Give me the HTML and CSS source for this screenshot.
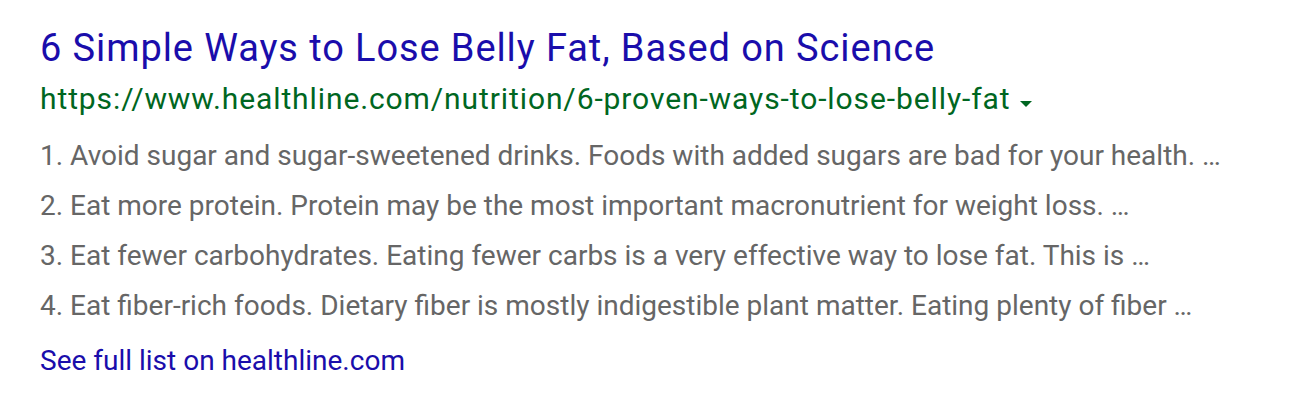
FILE: index.html
```html
<!DOCTYPE html>
<html>
<head>
<meta charset="utf-8">
<link rel="stylesheet" href="styles.css">
</head>
<body>
<div class="result">
  <h3 class="title">6 Simple Ways to Lose Belly Fat, Based on Science</h3>
  <div class="url-row">
    <cite class="url">https://www.healthline.com/nutrition/6-proven-ways-to-lose-belly-fat</cite>
    <span class="caret"></span>
  </div>
  <ol class="list">
    <li>1. Avoid sugar and sugar-sweetened drinks. Foods with added sugars are bad for your health. …</li>
    <li>2. Eat more protein. Protein may be the most important macronutrient for weight loss. …</li>
    <li>3. Eat fewer carbohydrates. Eating fewer carbs is a very effective way to lose fat. This is …</li>
    <li>4. Eat fiber-rich foods. Dietary fiber is mostly indigestible plant matter. Eating plenty of fiber …</li>
  </ol>
  <a class="more">See full list on healthline.com</a>
</div>
</body>
</html>
```

FILE: styles.css
```css
html, body {
  margin: 0;
  padding: 0;
  background: #fff;
}
body {
  font-family: Roboto, "Liberation Sans", Arial, sans-serif;
}
.result {
  padding: 26px 0 0 40px;
}
.title {
  margin: 0;
  font-weight: 400;
  font-size: 38px;
  line-height: 44px;
  letter-spacing: 0.9px;
  color: #1a0dab;
  white-space: nowrap;
}
.url-row {
  display: flex;
  align-items: flex-start;
  margin-top: 8px;
  height: 42px;
}
.url {
  font-style: normal;
  font-size: 30px;
  line-height: 42px;
  letter-spacing: 0.9px;
  color: #006621;
  white-space: nowrap;
}
.caret {
  width: 0;
  height: 0;
  border-left: 6px solid transparent;
  border-right: 6px solid transparent;
  border-top: 6px solid #006621;
  margin-left: 10px;
  margin-top: 23px;
}
.list {
  list-style: none;
  margin: 11px 0 0 0;
  padding: 0;
}
.list li {
  font-size: 28px;
  line-height: 50px;
  color: #666666;
  white-space: nowrap;
}
.more {
  display: block;
  margin-top: 10px;
  font-size: 28px;
  line-height: 40px;
  color: #1a0dab;
}
```
